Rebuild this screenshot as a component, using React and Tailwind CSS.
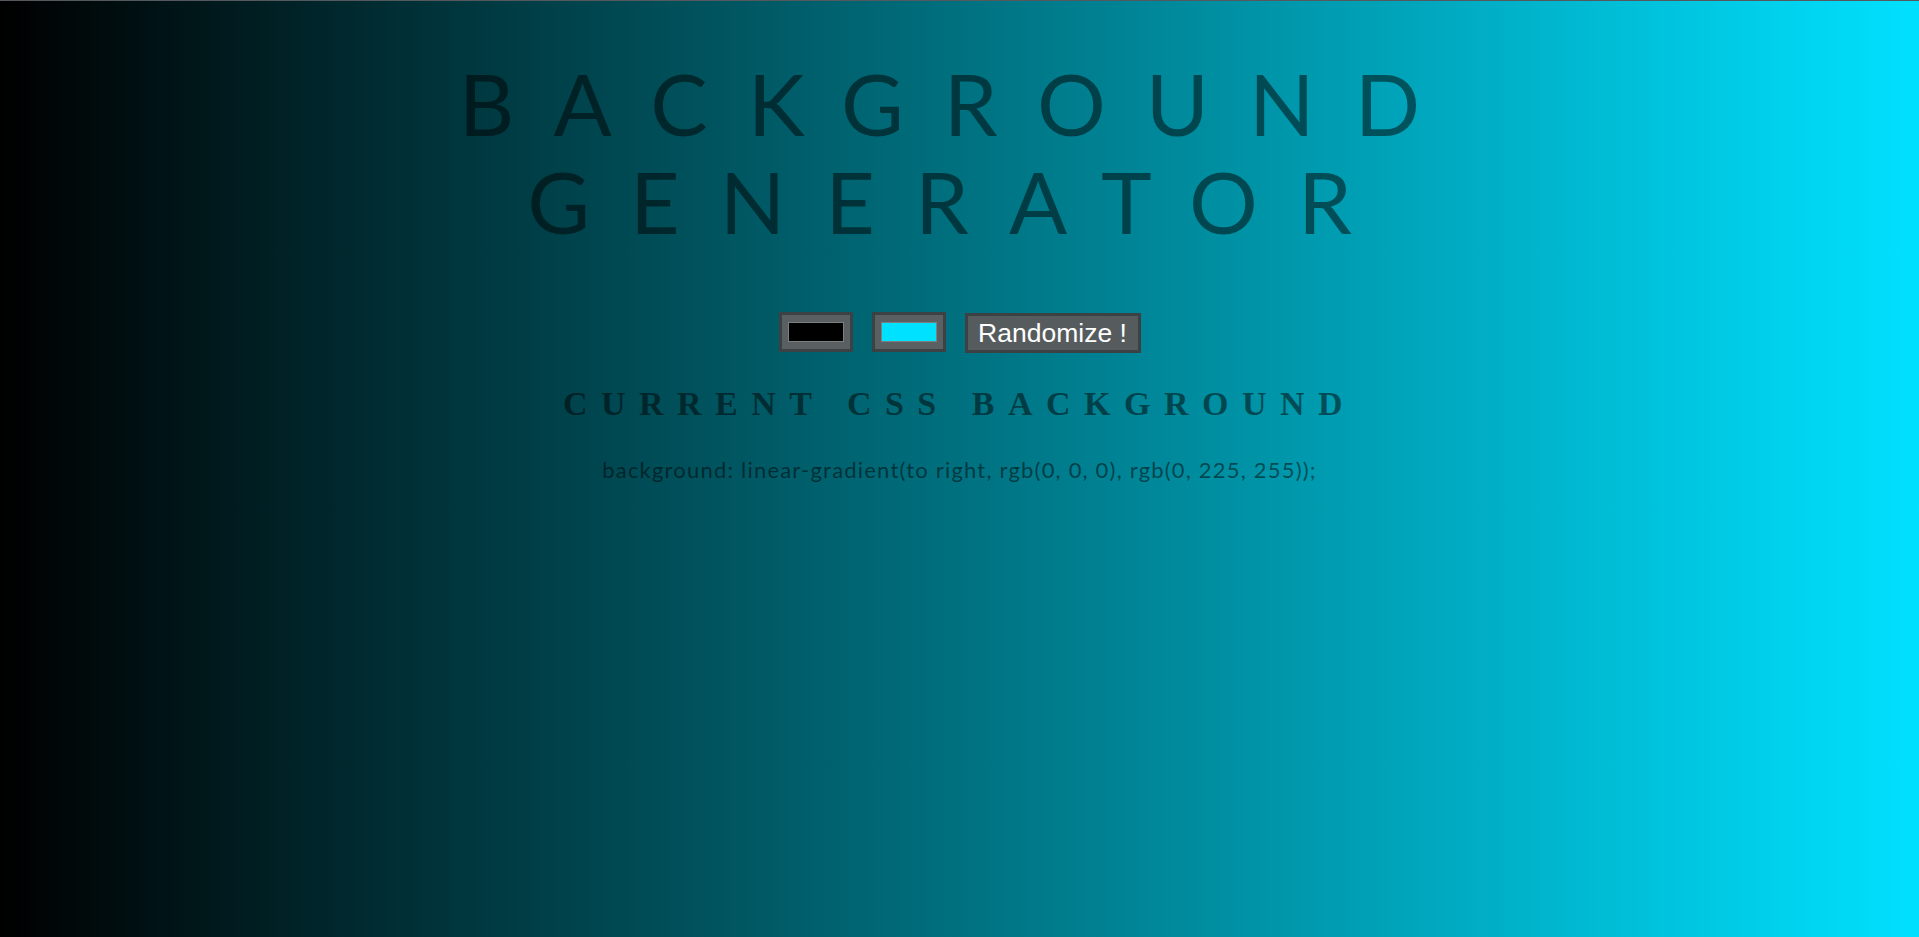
import React, { useState } from 'react';

const toHex = (n) => n.toString(16).padStart(2, '0');

const randomColor = () => {
  const r = Math.floor(Math.random() * 256);
  const g = Math.floor(Math.random() * 256);
  const b = Math.floor(Math.random() * 256);
  return `#${toHex(r)}${toHex(g)}${toHex(b)}`;
};

const hexToRgb = (hex) => {
  const value = hex.replace('#', '');
  const r = parseInt(value.slice(0, 2), 16);
  const g = parseInt(value.slice(2, 4), 16);
  const b = parseInt(value.slice(4, 6), 16);
  return `rgb(${r}, ${g}, ${b})`;
};

const ColorPicker = ({ value, onChange }) => (
  <label className="block w-[74px] h-[40px] border-[3px] border-[#3c4244] bg-[#5a6062] px-[6px] py-[7px] cursor-pointer">
    <span className="block w-full h-full border border-[#7a7f80]" style={{ backgroundColor: value }} />
    <input
      type="color"
      value={value}
      onChange={(event) => onChange(event.target.value)}
      className="sr-only"
    />
  </label>
);

const App = () => {
  const [color1, setColor1] = useState('#000000');
  const [color2, setColor2] = useState('#00e1ff');

  const gradient = `linear-gradient(to right, ${hexToRgb(color1)}, ${hexToRgb(color2)})`;

  const handleRandomize = () => {
    setColor1(randomColor());
    setColor2(randomColor());
  };

  return (
    <div
      className="min-h-screen w-full border-t border-[#55595d] text-center text-black/50 pt-[53px]"
      style={{ background: gradient }}
    >
      <h1 className="font-['Lato',_'Liberation_Sans',_sans-serif] font-normal text-[86px] leading-[98px] tracking-[40px] uppercase">
        <span className="block">Background</span>
        <span className="block">Generator</span>
      </h1>

      <div className="mt-[62px] flex items-start justify-center gap-[19px]">
        <ColorPicker value={color1} onChange={setColor1} />
        <ColorPicker value={color2} onChange={setColor2} />
        <button
          type="button"
          onClick={handleRandomize}
          className="mt-px w-[176px] h-[40px] border-[3px] border-[#3c4244] bg-[#565c5e] text-white font-['Liberation_Sans',_Arial,_sans-serif] text-[26.5px] leading-none"
        >
          Randomize !
        </button>
      </div>

      <h3 className="mt-[31px] font-['Liberation_Serif',_'Times_New_Roman',_serif] font-bold text-[34px] leading-[40px] tracking-[13.5px] uppercase">
        Current CSS Background
      </h3>

      <p className="mt-[34px] font-['Lato',_'Liberation_Sans',_sans-serif] text-[22px] leading-[24px] tracking-[1.2px]">
        background: {gradient};
      </p>
    </div>
  );
};

export default App;
